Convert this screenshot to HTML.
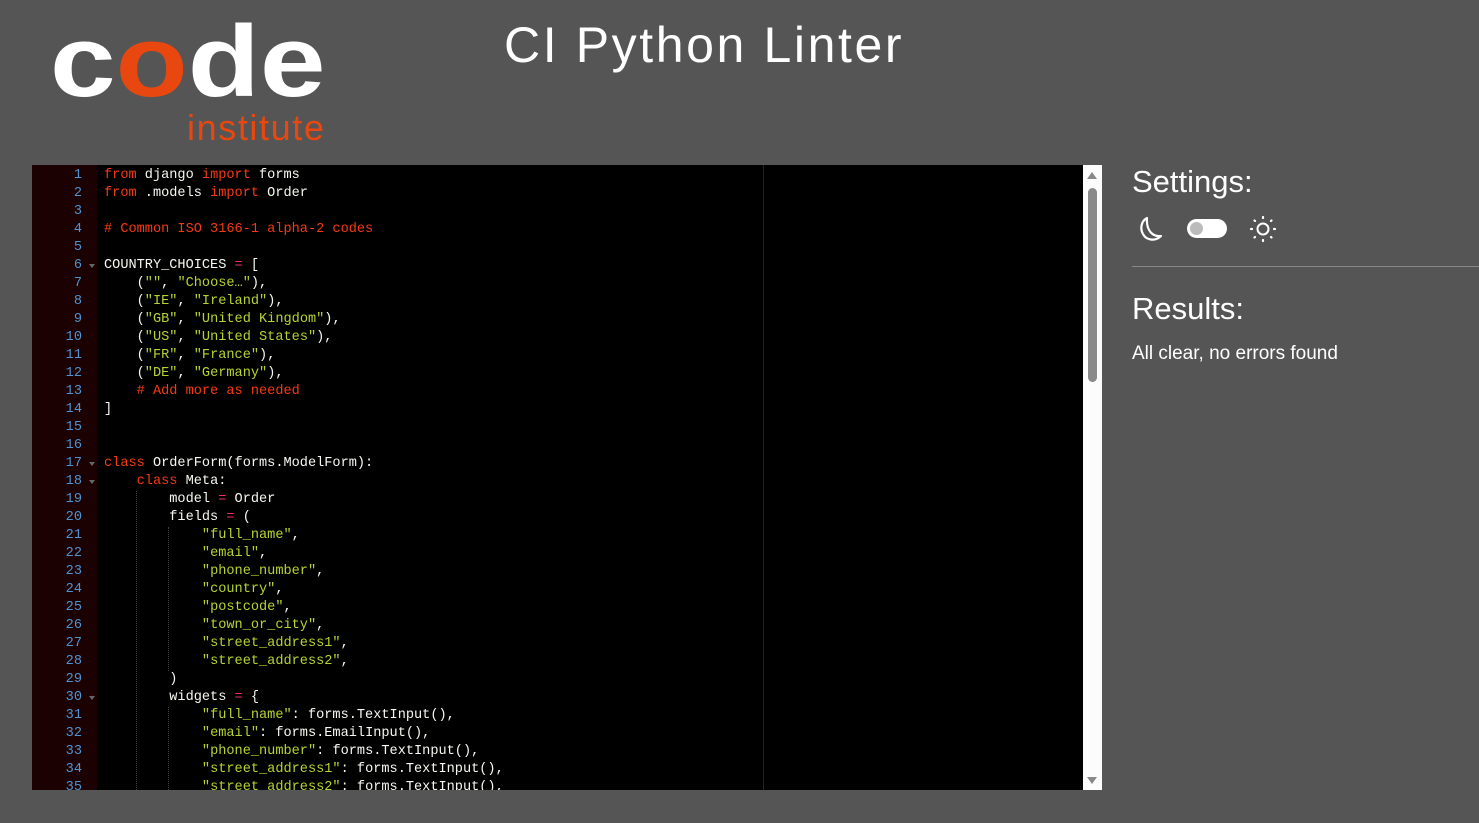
<!DOCTYPE html>
<html><head><meta charset="utf-8"><style>
html,body{margin:0;padding:0;background:#555;width:1479px;height:823px;overflow:hidden;font-family:"Liberation Sans",sans-serif}
.logo{position:absolute;left:50px;top:-4px;color:#fff;font-weight:bold;font-size:118px;letter-spacing:0;line-height:1;transform:scaleY(0.86);transform-origin:0 107px}
.logo .o{color:#e8480f}
.inst{position:absolute;left:187px;top:110px;color:#e8480f;font-size:36px;letter-spacing:1.6px;line-height:1}
.title{position:absolute;left:504px;top:16px;color:#fff;font-size:50px;font-weight:300;letter-spacing:2.6px}
.ed{position:absolute;left:32px;top:165px;width:1051px;height:625px;background:#000;overflow:hidden}
.gut{position:absolute;left:0;top:0;width:65px;height:625px;background:#1c0103}
.pm{position:absolute;left:731px;top:0;width:1px;height:625px;background:#222}
.code{position:absolute;left:0;top:2px;font-family:"Liberation Mono",monospace;font-size:13.6px;line-height:18px;color:#f8f8f2;white-space:pre}
.ln{display:inline-block;width:50px;text-align:right;color:#4f93d0;margin-right:22px;position:relative}
.f::after{content:"";position:absolute;right:-13px;top:7px;border:3px solid transparent;border-top:4px solid #666}
.k{color:#f53a13}.s{color:#b7d332}.c{color:#f53a13}.p{color:#f92672}
.g{position:absolute;width:0;border-left:1px dotted #444}
.sb{position:absolute;left:1083px;top:165px;width:19px;height:625px;background:#fcfcfc}
.th{position:absolute;left:1088px;top:188px;width:9px;height:194px;background:#8a8a8a;border-radius:5px}
.side{position:absolute;left:1132px;color:#fff}
</style></head><body>
<div class="logo">c<span class="o">o</span>de</div>
<div class="inst">institute</div>
<div class="title">CI Python Linter</div>
<div class="ed">
<div class="gut"></div><div class="pm"></div>
<div class="g" style="left:104px;top:326px;height:299px"></div>
<div class="g" style="left:136px;top:362px;height:144px"></div>
<div class="g" style="left:136px;top:542px;height:83px"></div>
<div class="code"><span class="ln">1</span><span class="k">from</span> django <span class="k">import</span> forms
<span class="ln">2</span><span class="k">from</span> .models <span class="k">import</span> Order
<span class="ln">3</span>
<span class="ln">4</span><span class="c"># Common ISO 3166-1 alpha-2 codes</span>
<span class="ln">5</span>
<span class="ln f">6</span>COUNTRY_CHOICES <span class="p">=</span> [
<span class="ln">7</span>    (<span class="s">""</span>, <span class="s">"Choose…"</span>),
<span class="ln">8</span>    (<span class="s">"IE"</span>, <span class="s">"Ireland"</span>),
<span class="ln">9</span>    (<span class="s">"GB"</span>, <span class="s">"United Kingdom"</span>),
<span class="ln">10</span>    (<span class="s">"US"</span>, <span class="s">"United States"</span>),
<span class="ln">11</span>    (<span class="s">"FR"</span>, <span class="s">"France"</span>),
<span class="ln">12</span>    (<span class="s">"DE"</span>, <span class="s">"Germany"</span>),
<span class="ln">13</span>    <span class="c"># Add more as needed</span>
<span class="ln">14</span>]
<span class="ln">15</span>
<span class="ln">16</span>
<span class="ln f">17</span><span class="k">class</span> OrderForm(forms.ModelForm):
<span class="ln f">18</span>    <span class="k">class</span> Meta:
<span class="ln">19</span>        model <span class="p">=</span> Order
<span class="ln">20</span>        fields <span class="p">=</span> (
<span class="ln">21</span>            <span class="s">"full_name"</span>,
<span class="ln">22</span>            <span class="s">"email"</span>,
<span class="ln">23</span>            <span class="s">"phone_number"</span>,
<span class="ln">24</span>            <span class="s">"country"</span>,
<span class="ln">25</span>            <span class="s">"postcode"</span>,
<span class="ln">26</span>            <span class="s">"town_or_city"</span>,
<span class="ln">27</span>            <span class="s">"street_address1"</span>,
<span class="ln">28</span>            <span class="s">"street_address2"</span>,
<span class="ln">29</span>        )
<span class="ln f">30</span>        widgets <span class="p">=</span> {
<span class="ln">31</span>            <span class="s">"full_name"</span>: forms.TextInput(),
<span class="ln">32</span>            <span class="s">"email"</span>: forms.EmailInput(),
<span class="ln">33</span>            <span class="s">"phone_number"</span>: forms.TextInput(),
<span class="ln">34</span>            <span class="s">"street_address1"</span>: forms.TextInput(),
<span class="ln">35</span>            <span class="s">"street_address2"</span>: forms.TextInput(),
</div></div>
<div class="sb"></div>
<div style="position:absolute;left:1087px;top:172px;border:5px solid transparent;border-bottom:7px solid #888;border-top:0"></div>
<div style="position:absolute;left:1087px;top:777px;border:5px solid transparent;border-top:7px solid #888;border-bottom:0"></div>
<div class="th"></div>
<div class="side" style="top:164px;font-size:31px;font-weight:300">Settings:</div>
<svg style="position:absolute;left:1138px;top:214px" width="28" height="30" viewBox="0 0 28 30"><path d="M9 4 C3 7 2 15 5 20 C8 26 17 28 23 22 C15 23 8 17 9 4 Z" fill="none" stroke="#fff" stroke-width="2.2" stroke-linejoin="round"/></svg>
<div style="position:absolute;left:1187px;top:219px;width:40px;height:19px;background:#fff;border-radius:10px"><div style="position:absolute;left:3px;top:3px;width:13px;height:13px;border-radius:50%;background:#bbb"></div></div>
<svg style="position:absolute;left:1249px;top:215px" width="28" height="28" viewBox="0 0 28 28"><circle cx="14" cy="14" r="5.5" fill="none" stroke="#fff" stroke-width="2"/><g stroke="#fff" stroke-width="2.2" stroke-linecap="round"><path d="M14 2v1M14 25v1M2 14h1M25 14h1M5.5 5.5l.5.5M22 22l.5.5M5.5 22.5l.5-.5M22 6l.5-.5"/></g></svg>
<div style="position:absolute;left:1132px;top:266px;width:347px;height:1px;background:#888"></div>
<div class="side" style="top:291px;font-size:31px;font-weight:300">Results:</div>
<div class="side" style="top:343px;font-size:19px">All clear, no errors found</div>
</body></html>
